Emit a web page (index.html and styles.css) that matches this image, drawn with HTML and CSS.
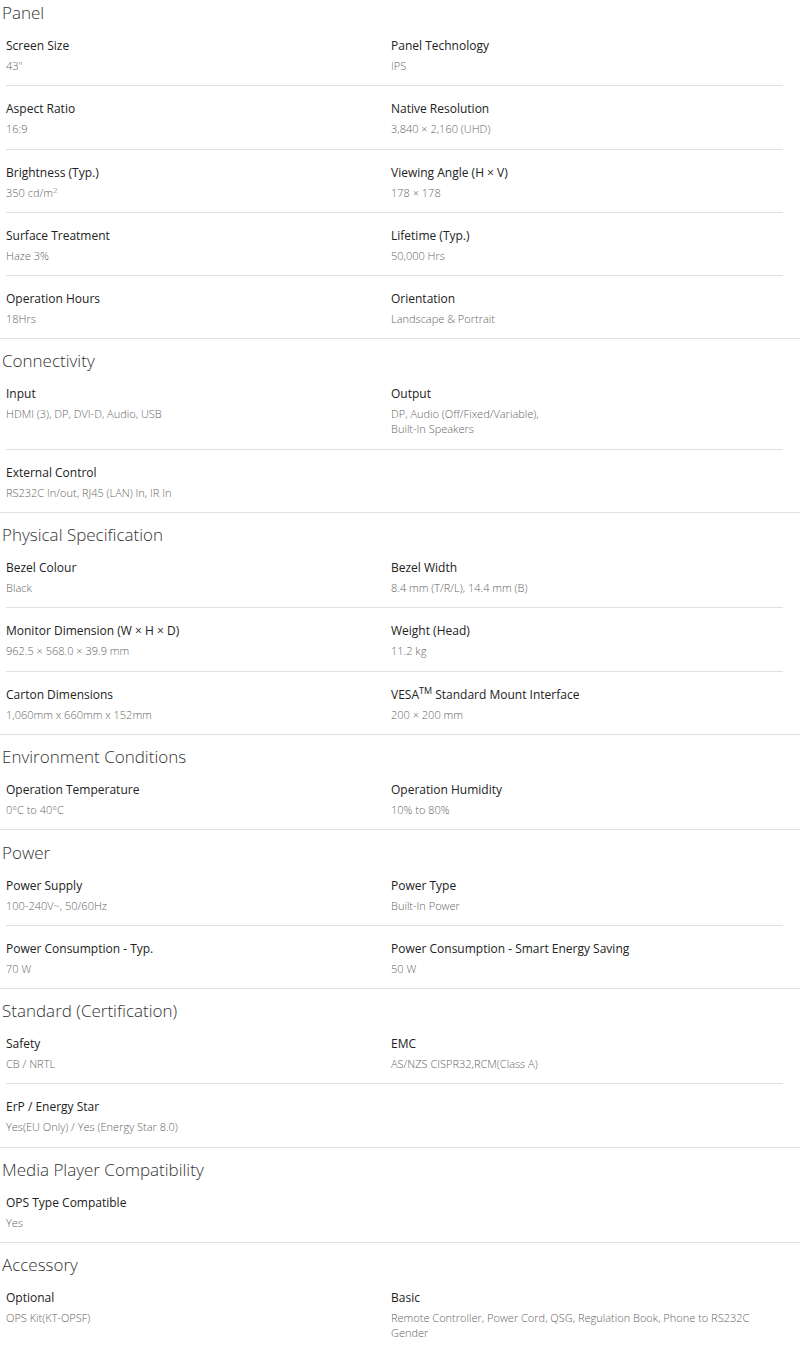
FILE: index.html
```html
<!DOCTYPE html>
<html lang="en">
<head>
<meta charset="utf-8">
<title>Specifications</title>
<link rel="stylesheet" href="styles.css">
</head>
<body>
<div class="specs">

  <section class="spec">
    <h2 class="spec-title">Panel</h2>
    <div class="spec-row">
      <div class="spec-item"><div class="label">Screen Size</div><div class="value">43"</div></div>
      <div class="spec-item"><div class="label">Panel Technology</div><div class="value">IPS</div></div>
    </div>
    <div class="spec-row">
      <div class="spec-item"><div class="label">Aspect Ratio</div><div class="value">16:9</div></div>
      <div class="spec-item"><div class="label">Native Resolution</div><div class="value">3,840 × 2,160 (UHD)</div></div>
    </div>
    <div class="spec-row">
      <div class="spec-item"><div class="label">Brightness (Typ.)</div><div class="value">350 cd/m<sup>2</sup></div></div>
      <div class="spec-item"><div class="label">Viewing Angle (H × V)</div><div class="value">178 × 178</div></div>
    </div>
    <div class="spec-row">
      <div class="spec-item"><div class="label">Surface Treatment</div><div class="value">Haze 3%</div></div>
      <div class="spec-item"><div class="label">Lifetime (Typ.)</div><div class="value">50,000 Hrs</div></div>
    </div>
    <div class="spec-row">
      <div class="spec-item"><div class="label">Operation Hours</div><div class="value">18Hrs</div></div>
      <div class="spec-item"><div class="label">Orientation</div><div class="value">Landscape &amp; Portrait</div></div>
    </div>
  </section>

  <section class="spec">
    <h2 class="spec-title">Connectivity</h2>
    <div class="spec-row">
      <div class="spec-item"><div class="label">Input</div><div class="value">HDMI (3), DP, DVI-D, Audio, USB</div></div>
      <div class="spec-item"><div class="label">Output</div><div class="value">DP, Audio (Off/Fixed/Variable),<br>Built-In Speakers</div></div>
    </div>
    <div class="spec-row">
      <div class="spec-item"><div class="label">External Control</div><div class="value">RS232C In/out, RJ45 (LAN) In, IR In</div></div>
    </div>
  </section>

  <section class="spec">
    <h2 class="spec-title">Physical Specification</h2>
    <div class="spec-row">
      <div class="spec-item"><div class="label">Bezel Colour</div><div class="value">Black</div></div>
      <div class="spec-item"><div class="label">Bezel Width</div><div class="value">8.4 mm (T/R/L), 14.4 mm (B)</div></div>
    </div>
    <div class="spec-row">
      <div class="spec-item"><div class="label">Monitor Dimension (W × H × D)</div><div class="value">962.5 × 568.0 × 39.9 mm</div></div>
      <div class="spec-item"><div class="label">Weight (Head)</div><div class="value">11.2 kg</div></div>
    </div>
    <div class="spec-row">
      <div class="spec-item"><div class="label">Carton Dimensions</div><div class="value">1,060mm x 660mm x 152mm</div></div>
      <div class="spec-item"><div class="label">VESA<sup>TM</sup> Standard Mount Interface</div><div class="value">200 × 200 mm</div></div>
    </div>
  </section>

  <section class="spec">
    <h2 class="spec-title">Environment Conditions</h2>
    <div class="spec-row">
      <div class="spec-item"><div class="label">Operation Temperature</div><div class="value">0°C to 40°C</div></div>
      <div class="spec-item"><div class="label">Operation Humidity</div><div class="value">10% to 80%</div></div>
    </div>
  </section>

  <section class="spec">
    <h2 class="spec-title">Power</h2>
    <div class="spec-row">
      <div class="spec-item"><div class="label">Power Supply</div><div class="value">100-240V~, 50/60Hz</div></div>
      <div class="spec-item"><div class="label">Power Type</div><div class="value">Built-In Power</div></div>
    </div>
    <div class="spec-row">
      <div class="spec-item"><div class="label">Power Consumption - Typ.</div><div class="value">70 W</div></div>
      <div class="spec-item"><div class="label">Power Consumption - Smart Energy Saving</div><div class="value">50 W</div></div>
    </div>
  </section>

  <section class="spec">
    <h2 class="spec-title">Standard (Certification)</h2>
    <div class="spec-row">
      <div class="spec-item"><div class="label">Safety</div><div class="value">CB / NRTL</div></div>
      <div class="spec-item"><div class="label">EMC</div><div class="value">AS/NZS CISPR32,RCM(Class A)</div></div>
    </div>
    <div class="spec-row">
      <div class="spec-item"><div class="label">ErP / Energy Star</div><div class="value">Yes(EU Only) / Yes (Energy Star 8.0)</div></div>
    </div>
  </section>

  <section class="spec">
    <h2 class="spec-title">Media Player Compatibility</h2>
    <div class="spec-row">
      <div class="spec-item"><div class="label">OPS Type Compatible</div><div class="value">Yes</div></div>
    </div>
  </section>

  <section class="spec">
    <h2 class="spec-title">Accessory</h2>
    <div class="spec-row">
      <div class="spec-item"><div class="label">Optional</div><div class="value">OPS Kit(KT-OPSF)</div></div>
      <div class="spec-item"><div class="label">Basic</div><div class="value">Remote Controller, Power Cord, QSG, Regulation Book, Phone to RS232C Gender</div></div>
    </div>
  </section>

</div>
</body>
</html>
```

FILE: styles.css
```css
html, body {
  margin: 0;
  padding: 0;
  background: #ffffff;
}

body {
  font-family: "Open Sans", "Liberation Sans", sans-serif;
  color: #333333;
}

.specs {
  width: 800px;
}

.spec {
  border-bottom: 1px solid #e0e0e0;
}

.spec-title {
  margin: 0;
  padding: 12.2px 0 0 2px;
  font-size: 17px;
  line-height: 20px;
  font-weight: 300;
  color: #333333;
}

.spec:first-child .spec-title {
  padding-top: 3px;
}

.spec-row {
  display: grid;
  grid-template-columns: 385px 1fr;
  margin: 0 17px 0 6px;
  padding: 14px 0 12.25px;
  border-bottom: 1px solid #e0e0e0;
}

.spec-row:last-child {
  border-bottom: none;
}

.spec-item {
  padding-right: 12px;
}

.label {
  font-size: 12px;
  line-height: 17px;
  color: #222222;
}

.label sup {
  font-size: 9px;
  line-height: 0;
  vertical-align: 5px;
}

.value {
  margin-top: 4px;
  font-size: 11px;
  line-height: 15px;
  font-weight: 300;
  color: #666666;
}

.value sup {
  font-size: 8px;
  line-height: 0;
  vertical-align: 4px;
}
```
